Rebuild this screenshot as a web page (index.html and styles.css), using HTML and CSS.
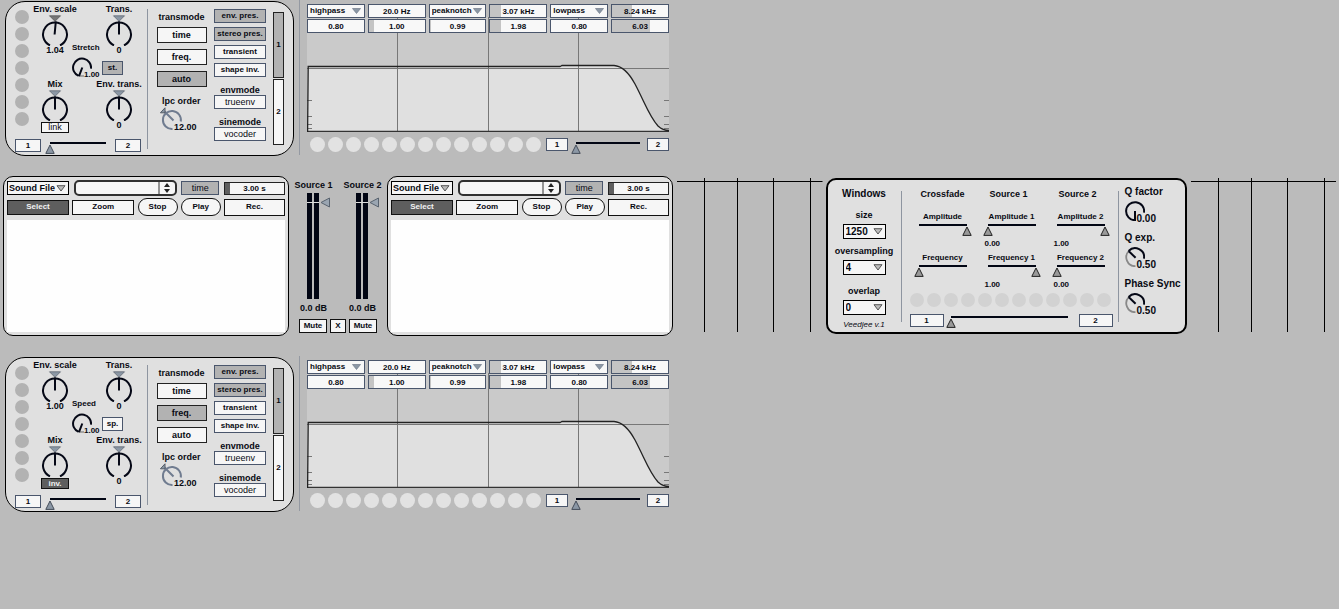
FILE: index.html
```
<!DOCTYPE html>
<html lang="en">
<head>
<meta charset="utf-8">
<title>Veedjee v.1</title>
<link rel="stylesheet" href="styles.css">
</head>
<body>
<svg class="defs" aria-hidden="true">
  <symbol id="dial" viewBox="0 0 28 31">
    <path d="M8.5 .8h11L14 6.3z" fill="#8b97a5" stroke="#5e6671" stroke-width=".8"/>
    <path d="M9 30.4A12 12 0 1 1 19 30.4" fill="none" stroke="#050816" stroke-width="2"/>
    <path d="M14 19.5V6.5" stroke="#050816" stroke-width="2"/>
  </symbol>
  <symbol id="dial-turned" viewBox="0 0 28 31">
    <path d="M8.5 .8h11L14 6.3z" fill="#777" stroke="#555" stroke-width=".8"/>
    <path d="M9 30.4A12 12 0 1 1 19 30.4" fill="none" stroke="#050816" stroke-width="2"/>
    <path d="M13.6 19.5L14.8 6.5" stroke="#050816" stroke-width="2"/>
  </symbol>
  <symbol id="dial-min" viewBox="0 0 20 20">
    <path d="M7 19H12" stroke="#888" stroke-width="1.4"/>
    <path d="M6.6 18.9A9 9 0 1 1 19 11.6M10.3 10.5L7 19.2" fill="none" stroke="#050816" stroke-width="2"/>
  </symbol>
  <symbol id="dial-zero" viewBox="0 0 20 20">
    <path d="M10 19.2A9 9 0 1 1 19 11.6M10 10V20" fill="none" stroke="#050816" stroke-width="2"/>
  </symbol>
  <symbol id="dial-half" viewBox="0 0 20 20">
    <path d="M10.5 19.2A9 9 0 0 1 3.8 4" fill="none" stroke="#888" stroke-width="1.8"/>
    <path d="M3.6 4A9 9 0 0 1 19 11.6M3.6 4L10.6 10.8" fill="none" stroke="#050816" stroke-width="2"/>
  </symbol>
  <symbol id="dial-lpc" viewBox="0 0 24 24">
    <path d="M12.5 22A9 9 0 1 1 20.8 14.5M4.5 4.5L13.5 13.5" fill="none" stroke="#707c90" stroke-width="2"/>
    <path d="M5 .8V5.8H.4z" fill="#8b97a5" stroke="#555d68" stroke-width="1"/>
  </symbol>
  <symbol id="curve" viewBox="0 0 362 115" preserveAspectRatio="none">
    <path d="M1 115V49H253V48H307C316 49 322 56 328 67C338 86 342 99 351 109Q356 114 362 114V115z" fill="#e0e0e0"/>
    <path d="M0 51.5H362" stroke="#777"/>
    <path d="M90.5 0V115M181.5 0V115M271.5 0V115" stroke="#777"/>
    <path d="M0 83.5H5M0 99.5H5M0 107.5H5M0 111.5H5M357 83.5H362M357 99.5H362M357 107.5H362M357 111.5H362" stroke="#777"/>
    <path d="M0 114.5H362" stroke="#333" stroke-width="1.4"/>
    <path d="M.6 115L1.2 49.5H253L255 48.5H307C316 49 322 56 328 67C338 86 342 99 351 109Q356 113.5 362 113.5" fill="none" stroke="#222" stroke-width="1.3"/>
  </symbol>
  <symbol id="fader" viewBox="0 0 26 106">
    <path d="M0 0H5V106H0zM7 0H12V106H7z" fill="#020614"/>
    <path d="M0 9.5H12" stroke="#ddd"/>
    <path d="M14 9.5L22.5 5V14z" fill="#9aa5b1" stroke="#59636f"/>
  </symbol>
  <symbol id="rules" viewBox="0 0 146 154" preserveAspectRatio="none">
    <path d="M0 3.5H146M27.5 0V154M60.5 0V154M96.5 0V154M133.5 0V154" stroke="#000" vector-effect="non-scaling-stroke" shape-rendering="crispEdges"/>
  </symbol>
</svg>

<main class="patch">
  <div class="lane">
    <section class="voice" aria-label="Voice 1">
      <div class="voice-main">
        <div class="voice-body">
          <div class="dots dots-column"><i></i><i></i><i></i><i></i><i></i><i></i><i></i></div>
          <div class="knobs">
            <div class="knob-row">
              <div class="knob"><span>Env. scale</span><svg><use href="#dial-turned"/></svg><output>1.04</output></div>
              <div class="knob"><span>Trans.</span><svg><use href="#dial"/></svg><output>0</output></div>
            </div>
            <div class="mini-row">
              <div class="mini"><span>Stretch</span><svg><use href="#dial-min"/></svg><output>1.00</output></div>
              <button class="btn slate sync on">st.</button>
            </div>
            <div class="knob-row">
              <div class="knob"><span>Mix</span><svg><use href="#dial"/></svg><button class="btn link">link</button></div>
              <div class="knob"><span>Env. trans.</span><svg><use href="#dial"/></svg><output>0</output></div>
            </div>
          </div>
        </div>
        <div class="morph">
          <button class="btn slate">1</button><input class="slider" type="range" value="0" aria-label="Voice morph"><button class="btn slate">2</button>
        </div>
      </div>
      <div class="modes">
        <span>transmode</span>
        <button class="btn mode">time</button>
        <button class="btn mode">freq.</button>
        <button class="btn mode on">auto</button>
        <div class="lpc"><span>lpc order</span><svg><use href="#dial-lpc"/></svg><output>12.00</output></div>
      </div>
      <div class="options">
        <button class="btn slate on">env. pres.</button>
        <button class="btn slate on">stereo pres.</button>
        <button class="btn slate">transient</button>
        <button class="btn slate">shape inv.</button>
        <span>envmode</span>
        <button class="btn slate thin">trueenv</button>
        <span>sinemode</span>
        <button class="btn slate thin">vocoder</button>
      </div>
      <div class="tabs"><button class="btn on">1</button><button class="btn">2</button></div>
    </section>
    <section class="filter" aria-label="Filter 1">
      <svg class="plot"><use href="#curve"/></svg>
      <div class="bands">
        <select class="field" aria-label="Band 1 type"><option>highpass</option></select>
        <input class="field" value="20.0 Hz" aria-label="Band 1 frequency">
        <select class="field" aria-label="Band 2 type"><option>peaknotch</option></select>
        <input class="field" value="3.07 kHz" aria-label="Band 2 frequency" style="--fill:19%">
        <select class="field" aria-label="Band 3 type"><option>lowpass</option></select>
        <input class="field" value="8.24 kHz" aria-label="Band 3 frequency" style="--fill:36%">
        <input class="field" value="0.80" aria-label="Band 1 gain">
        <input class="field" value="1.00" aria-label="Band 1 Q" style="--fill:9%">
        <input class="field" value="0.99" aria-label="Band 2 gain" style="--fill:2%">
        <input class="field" value="1.98" aria-label="Band 2 Q" style="--fill:20%">
        <input class="field" value="0.80" aria-label="Band 3 gain">
        <input class="field" value="6.03" aria-label="Band 3 Q" style="--fill:67%">
      </div>
      <div class="filter-foot">
        <div class="dots dots-light"><i></i><i></i><i></i><i></i><i></i><i></i><i></i><i></i><i></i><i></i><i></i><i></i><i></i></div>
        <button class="btn slate">1</button><input class="slider" type="range" value="0" aria-label="Filter morph"><button class="btn slate">2</button>
      </div>
    </section>
  </div>

  <div class="center">
    <section class="source" aria-label="Source 1 player">
      <div class="source-bar">
        <select class="file" aria-label="Input type"><option>Sound File</option></select>
        <select class="slot" aria-label="Sound"><option></option></select>
        <button class="btn slate thin on">time</button>
        <input class="length" value="3.00 s" aria-label="Length">
      </div>
      <div class="source-bar tools">
        <button class="btn dark">Select</button><button class="btn">Zoom</button><button class="btn pill">Stop</button><button class="btn pill">Play</button><button class="btn">Rec.</button>
      </div>
      <div class="wave"></div>
    </section>
    <section class="mixer" aria-label="Mixer">
      <div class="channel"><span>Source 1</span><svg><use href="#fader"/></svg><output>0.0 dB</output></div>
      <div class="channel"><span>Source 2</span><svg><use href="#fader"/></svg><output>0.0 dB</output></div>
      <div class="mutes"><button class="btn">Mute</button><button class="btn swap">X</button><button class="btn">Mute</button></div>
    </section>
    <section class="source" aria-label="Source 2 player">
      <div class="source-bar">
        <select class="file" aria-label="Input type"><option>Sound File</option></select>
        <select class="slot" aria-label="Sound"><option></option></select>
        <button class="btn slate thin on">time</button>
        <input class="length" value="3.00 s" aria-label="Length">
      </div>
      <div class="source-bar tools">
        <button class="btn dark">Select</button><button class="btn">Zoom</button><button class="btn pill">Stop</button><button class="btn pill">Play</button><button class="btn">Rec.</button>
      </div>
      <div class="wave"></div>
    </section>
    <svg class="rules"><use href="#rules"/></svg>
    <section class="engine" aria-label="Engine">
      <div class="windows">
        <h2>Windows</h2>
        <label for="size">size</label><select id="size" class="pick"><option>1250</option></select>
        <label for="over">oversampling</label><select id="over" class="pick"><option>4</option></select>
        <label for="lap">overlap</label><select id="lap" class="pick"><option>0</option></select>
        <em>Veedjee v.1</em>
      </div>
      <div class="cross">
        <div class="cross-grid">
          <div class="cross-col">
            <h3>Crossfade</h3>
            <label for="xa">Amplitude</label><input id="xa" class="slider grey" type="range" value="100"><output></output>
            <label for="xf">Frequency</label><input id="xf" class="slider grey" type="range" value="0"><output></output>
          </div>
          <div class="cross-col">
            <h3>Source 1</h3>
            <label for="a1">Amplitude 1</label><input id="a1" class="slider grey" type="range" value="0"><output>0.00</output>
            <label for="f1">Frequency 1</label><input id="f1" class="slider grey" type="range" value="100"><output>1.00</output>
          </div>
          <div class="cross-col">
            <h3>Source 2</h3>
            <label for="a2">Amplitude 2</label><input id="a2" class="slider grey" type="range" value="100"><output>1.00</output>
            <label for="f2">Frequency 2</label><input id="f2" class="slider grey" type="range" value="0"><output>0.00</output>
          </div>
        </div>
        <div class="dots dots-faint"><i></i><i></i><i></i><i></i><i></i><i></i><i></i><i></i><i></i><i></i><i></i><i></i></div>
        <div class="morph"><button class="btn slate">1</button><input class="slider grey" type="range" value="0" aria-label="Engine morph"><button class="btn slate">2</button></div>
      </div>
      <div class="quality">
        <div class="mini"><span>Q factor</span><svg><use href="#dial-zero"/></svg><output>0.00</output></div>
        <div class="mini"><span>Q exp.</span><svg><use href="#dial-half"/></svg><output>0.50</output></div>
        <div class="mini"><span>Phase Sync</span><svg><use href="#dial-half"/></svg><output>0.50</output></div>
      </div>
    </section>
    <svg class="rules"><use href="#rules"/></svg>
  </div>

  <div class="lane">
    <section class="voice" aria-label="Voice 2">
      <div class="voice-main">
        <div class="voice-body">
          <div class="dots dots-column"><i></i><i></i><i></i><i></i><i></i><i></i><i></i></div>
          <div class="knobs">
            <div class="knob-row">
              <div class="knob"><span>Env. scale</span><svg><use href="#dial"/></svg><output>1.00</output></div>
              <div class="knob"><span>Trans.</span><svg><use href="#dial"/></svg><output>0</output></div>
            </div>
            <div class="mini-row">
              <div class="mini"><span>Speed</span><svg><use href="#dial-min"/></svg><output>1.00</output></div>
              <button class="btn slate sync">sp.</button>
            </div>
            <div class="knob-row">
              <div class="knob"><span>Mix</span><svg><use href="#dial"/></svg><button class="btn link dark">inv.</button></div>
              <div class="knob"><span>Env. trans.</span><svg><use href="#dial"/></svg><output>0</output></div>
            </div>
          </div>
        </div>
        <div class="morph">
          <button class="btn slate">1</button><input class="slider" type="range" value="0" aria-label="Voice morph"><button class="btn slate">2</button>
        </div>
      </div>
      <div class="modes">
        <span>transmode</span>
        <button class="btn mode">time</button>
        <button class="btn mode on">freq.</button>
        <button class="btn mode">auto</button>
        <div class="lpc"><span>lpc order</span><svg><use href="#dial-lpc"/></svg><output>12.00</output></div>
      </div>
      <div class="options">
        <button class="btn slate on">env. pres.</button>
        <button class="btn slate on">stereo pres.</button>
        <button class="btn slate">transient</button>
        <button class="btn slate">shape inv.</button>
        <span>envmode</span>
        <button class="btn slate thin">trueenv</button>
        <span>sinemode</span>
        <button class="btn slate thin">vocoder</button>
      </div>
      <div class="tabs"><button class="btn on">1</button><button class="btn">2</button></div>
    </section>
    <section class="filter" aria-label="Filter 2">
      <svg class="plot"><use href="#curve"/></svg>
      <div class="bands">
        <select class="field" aria-label="Band 1 type"><option>highpass</option></select>
        <input class="field" value="20.0 Hz" aria-label="Band 1 frequency">
        <select class="field" aria-label="Band 2 type"><option>peaknotch</option></select>
        <input class="field" value="3.07 kHz" aria-label="Band 2 frequency" style="--fill:19%">
        <select class="field" aria-label="Band 3 type"><option>lowpass</option></select>
        <input class="field" value="8.24 kHz" aria-label="Band 3 frequency" style="--fill:36%">
        <input class="field" value="0.80" aria-label="Band 1 gain">
        <input class="field" value="1.00" aria-label="Band 1 Q" style="--fill:9%">
        <input class="field" value="0.99" aria-label="Band 2 gain" style="--fill:2%">
        <input class="field" value="1.98" aria-label="Band 2 Q" style="--fill:20%">
        <input class="field" value="0.80" aria-label="Band 3 gain">
        <input class="field" value="6.03" aria-label="Band 3 Q" style="--fill:67%">
      </div>
      <div class="filter-foot">
        <div class="dots dots-light"><i></i><i></i><i></i><i></i><i></i><i></i><i></i><i></i><i></i><i></i><i></i><i></i><i></i></div>
        <button class="btn slate">1</button><input class="slider" type="range" value="0" aria-label="Filter morph"><button class="btn slate">2</button>
      </div>
    </section>
  </div>
</main>
</body>
</html>
```
FILE: styles.css
```
* { box-sizing: border-box; }

body {
  margin: 0;
  background: #bbb;
  color: #080a12;
  font: bold 9px/10px "Liberation Sans", Arial, sans-serif;
}

.defs { display: none; }
svg { display: block; flex: none; }
h2, h3 { margin: 0; font: inherit; }
span, label, output, h2, h3, em { white-space: nowrap; }

.patch { display: flex; flex-direction: column; }
.lane { display: flex; padding-left: 5px; }

/* Controls */
.btn {
  margin: 0;
  padding: 0;
  border: 1px solid #111;
  border-radius: 0;
  background: #f6f6f6;
  color: inherit;
  font: bold 8px/10px "Liberation Sans", Arial, sans-serif;
  white-space: nowrap;
}
.btn.slate { border-color: #4a566c; }
.btn.on { background: #b2b2b2; }
.btn.dark { background: #5e5e5e; color: #f2f2f2; }
.btn.thin { font-weight: normal; font-size: 9px; }

input, select {
  margin: 0;
  border-radius: 0;
  color: inherit;
  font: inherit;
  appearance: none;
}

.slider {
  display: block;
  min-width: 0;
  height: 12px;
  background: linear-gradient(#020614, #020614) 5px 0 / calc(100% - 10px) 2px no-repeat;
}
.slider::-webkit-slider-runnable-track { height: 12px; }
.slider::-webkit-slider-thumb {
  appearance: none;
  width: 10px;
  height: 10px;
  margin-top: 2px;
  background: url("data:image/svg+xml,%3Csvg xmlns='http://www.w3.org/2000/svg' viewBox='0 0 10 10'%3E%3Cpath d='M5 1L9.2 9.4H.8z' fill='%238b97a5' stroke='%23444c58'/%3E%3C/svg%3E");
}
.slider.grey::-webkit-slider-thumb {
  background: url("data:image/svg+xml,%3Csvg xmlns='http://www.w3.org/2000/svg' viewBox='0 0 10 10'%3E%3Cpath d='M5 1L9.2 9.4H.8z' fill='%23999' stroke='%23222'/%3E%3C/svg%3E");
}

.dots { display: flex; gap: 3px; }
.dots i { width: 14px; height: 14px; border-radius: 50%; background: #b2b2b2; }
.dots-column { flex-direction: column; }
.dots-light i { width: 15px; height: 15px; background: #e2e2e2; }
.dots-faint i { background: #d2d2d2; }

/* Voice panel */
.voice {
  display: flex;
  width: 289px;
  height: 155px;
  margin-top: 1px;
  border: 1px solid #000;
  border-radius: 20px;
  background: #e0e0e0;
}
.voice-main { width: 141px; padding: 2px 0 0 9px; }
.voice-body { display: flex; gap: 3px; height: 135px; }
.voice .dots-column { padding-top: 6px; }
.knob-row { display: flex; gap: 18px; }
.knob { display: flex; flex-direction: column; align-items: center; width: 46px; }
.knob svg { width: 28px; height: 31px; margin-top: 1px; }
.knob output { margin-top: -1px; }
.link { width: 28px; height: 11px; margin-top: 1px; font-size: 9px; font-weight: normal; line-height: 9px; }
.link.dark { font-size: 8px; font-weight: bold; }
.mini { display: flex; flex-direction: column; }
.mini svg { width: 20px; height: 20px; }
.mini output { margin: -7px 0 0 12px; }
.mini-row {
  display: flex;
  gap: 2px;
  margin: -12px 0 -1px 40px;
  font-size: 8px;
}
.mini-row .mini { width: 28px; }
.mini-row svg { margin-top: 4px; }
.sync { width: 21px; height: 14px; margin-top: 18px; }
.morph { display: flex; }
.morph .btn { flex: none; width: 26px; height: 13px; }
.morph .slider { flex: 1; margin: 3px 4px 0; }
.voice .morph { padding-right: 6px; }

.modes {
  display: flex;
  flex-direction: column;
  align-items: center;
  width: 59px;
  margin: 7px 0 6px;
  padding: 3px 0 0 9px;
  border-left: 1px solid #8e95a0;
}
.modes > span { margin-bottom: 5px; }
.mode { flex: none; width: 50px; height: 16px; margin-bottom: 6px; border-color: #222; font-size: 9px; }
.lpc { display: flex; flex-direction: column; align-self: stretch; padding: 3px 0 0 5px; }
.lpc svg { width: 24px; height: 24px; margin: 1px 0 -9px -2px; }
.lpc output { margin-left: 12px; }

.options {
  display: flex;
  flex-direction: column;
  width: 52px;
  margin: 7px 7px 0 8px;
}
.options .btn { flex: none; height: 14px; margin-bottom: 4px; }
.options span { align-self: center; margin-top: 4px; }

.tabs { display: flex; flex-direction: column; gap: 1px; width: 11px; margin-top: 10px; }
.tabs .btn { height: 66px; border-color: #222; }

/* Filter */
.filter {
  display: grid;
  grid-template-columns: 362px;
  grid-template-rows: 132px auto;
  height: 155px;
  margin-left: 5px;
  padding-left: 7px;
  border-left: 1px solid #9499a2;
}
.plot { grid-area: 1 / 1; width: 100%; height: 115px; margin-top: 17px; background: #cacaca; }
.bands {
  grid-area: 1 / 1;
  display: grid;
  grid-template-columns: repeat(6, 1fr);
  grid-auto-rows: 14px;
  align-content: start;
  gap: 1px 3px;
  padding-top: 4px;
}
.field {
  width: 100%;
  min-width: 0;
  height: 14px;
  padding: 0 1px;
  border: 1px solid #4a566c;
  background: linear-gradient(90deg, #c4c4c4 var(--fill, 0%), #f8f8f8 var(--fill, 0%));
  font-size: 8px;
  text-align: center;
}
select.field {
  padding-left: 2px;
  background: #f8f8f8 url("data:image/svg+xml,%3Csvg xmlns='http://www.w3.org/2000/svg' viewBox='0 0 9 6'%3E%3Cpath d='M.5 .5h8l-4 5z' fill='%238b97a5' stroke='%23707a88' stroke-width='.7'/%3E%3C/svg%3E") right 3px center / 9px 6px no-repeat;
  text-align: left;
}
.filter-foot { display: flex; padding: 5px 0 0 3px; }
.filter-foot .btn { flex: none; width: 22px; height: 13px; margin-top: 1px; }
.filter-foot .dots { margin-right: 5px; }
.filter-foot .slider { flex: 1; margin: 5px 2px 0 3px; }

/* Middle row */
.center { display: flex; height: 160px; margin: 20px 0 20px 3px; }
.source {
  display: flex;
  flex-direction: column;
  width: 286px;
  height: 160px;
  padding: 3px;
  border: 1px solid #000;
  border-radius: 10px;
  background: #e0e0e0;
}
.source-bar {
  display: grid;
  grid-template-columns: 62px 103px 38px 61px;
  justify-content: space-between;
  align-items: center;
  height: 16px;
}
.source-bar .btn { height: 14px; }
.file {
  height: 14px;
  padding: 0 1px;
  border: 1px solid #000;
  background: #f6f6f6 url("data:image/svg+xml,%3Csvg xmlns='http://www.w3.org/2000/svg' viewBox='0 0 10 7'%3E%3Cpath d='M1 .7h8L5 6z' fill='%23bbb' stroke='%23555'/%3E%3C/svg%3E") right 2px center / 10px 7px no-repeat;
}
.slot {
  height: 16px;
  border: 2px solid #303030;
  border-radius: 5px;
  background: #f6f6f6 url("data:image/svg+xml,%3Csvg xmlns='http://www.w3.org/2000/svg' viewBox='0 0 17 14'%3E%3Cpath d='M1 0V14' stroke='%23333'/%3E%3Cpath d='M6 6l3-4 3 4zM6 8l3 4 3-4z' fill='%23222'/%3E%3C/svg%3E") right 0 center / 17px 14px no-repeat;
}
.length {
  width: 61px;
  height: 13px;
  padding: 0;
  border: 1px solid #222;
  background: linear-gradient(90deg, #5e5e5e 5px, #f6f6f6 5px);
  font-size: 8px;
  text-align: center;
}
.source-bar.tools { grid-template-columns: 62px 62px 40px 40px 61px; height: 20px; margin-top: 1px; }
.tools .btn { height: 15px; }
.tools .pill { height: 18px; border-radius: 9px; }
.tools .btn:last-child { height: 17px; }
.wave { flex: 1; margin-top: 3px; background: #fefefe; }

.mixer {
  display: grid;
  grid-template-columns: 49px 49px;
  align-content: start;
  width: 98px;
  padding-top: 4px;
}
.channel { display: flex; flex-direction: column; align-items: center; }
.channel svg { width: 26px; height: 106px; margin: 3px 0 4px 12px; }
.mutes { grid-column: 1 / 3; display: flex; justify-content: center; gap: 3px; margin-top: 6px; }
.mutes .btn { width: 28px; height: 14px; }
.mutes .swap { width: 16px; }

.rules { flex: 1; min-width: 0; height: 154px; margin: 2px 3px 0 4px; }

/* Engine panel */
.engine {
  display: flex;
  flex: none;
  width: 361px;
  height: 156px;
  margin-top: 2px;
  padding: 9px 0;
  border: 2px solid #000;
  border-radius: 10px;
  background: #e0e0e0;
}
.windows { display: flex; flex-direction: column; align-items: center; width: 73px; height: 144px; }
.windows h2 { margin-bottom: 11px; font-size: 10px; }
.pick {
  flex: none;
  width: 43px;
  height: 15px;
  margin: 4px 0 7px;
  padding: 0 2px;
  border: 1px solid #000;
  background: #f6f6f6 url("data:image/svg+xml,%3Csvg xmlns='http://www.w3.org/2000/svg' viewBox='0 0 10 7'%3E%3Cpath d='M1 .7h8L5 6z' fill='%23bbb' stroke='%23555'/%3E%3C/svg%3E") right 2px center / 10px 7px no-repeat;
  font-size: 10px;
}
.pick + [for="lap"] { margin-top: 4px; }
.windows em { margin-top: -2px; font-weight: normal; font-size: 8px; }

.cross {
  width: 218px;
  height: 131px;
  margin-top: 2px;
  padding: 0 5px 0 8px;
  border: 1px solid #8e95a0;
  border-width: 0 1px;
}
.cross-grid { display: grid; grid-template-columns: repeat(3, 58px); gap: 11px; margin: -2px 0 3px 4px; }
.cross-col { display: flex; flex-direction: column; font-size: 8px; }
.cross-col h3 { margin-bottom: 13px; align-self: center; font-size: 9px; }
.cross-col + .cross-col h3 { margin-right: 6px; }
.cross-col label { align-self: center; margin-bottom: 2px; }
.cross-col .slider { width: 100%; }
.cross-col output { height: 10px; margin: 3px 0 4px 2px; }
.cross-col output:last-child { margin-bottom: 0; }
.cross .morph { margin-top: 7px; }
.cross .morph .btn { width: 34px; }
.cross .morph .slider { margin: 2px 6px 0 2px; }

.quality { display: flex; flex-direction: column; gap: 9px; margin: -2px 0 0 6px; font-size: 10px; }
.quality svg { margin-top: 4px; }
```
